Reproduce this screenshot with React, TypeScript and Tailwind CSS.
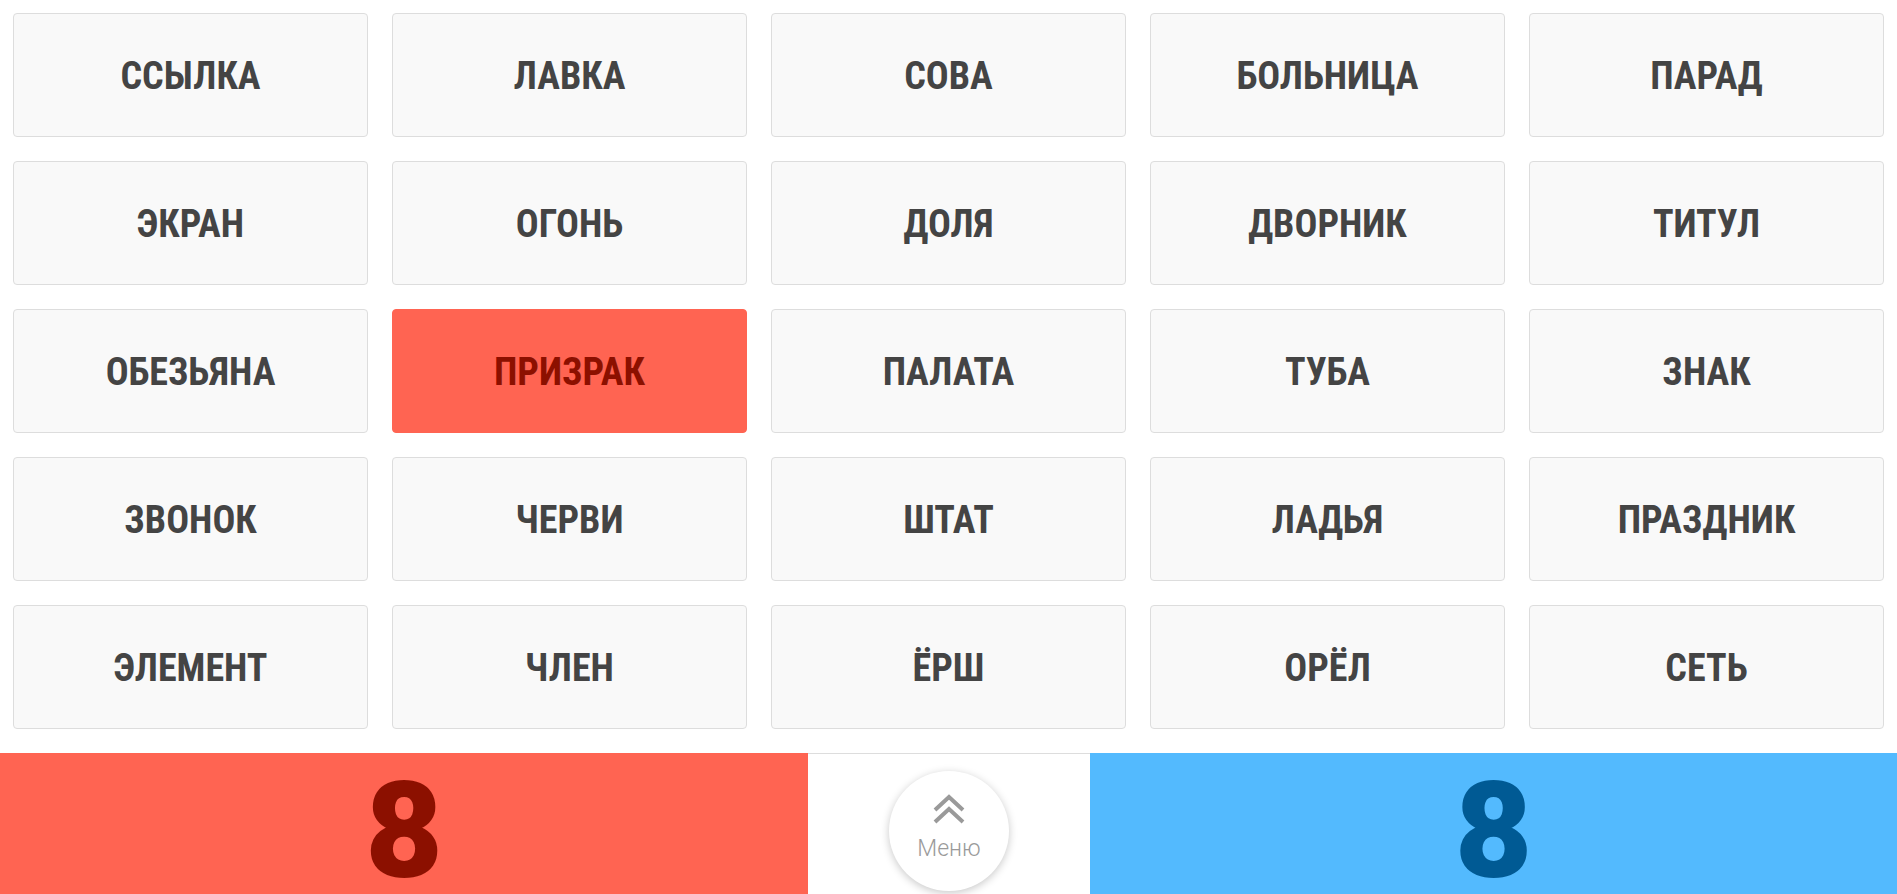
import React from "react";

const words = [
  "ССЫЛКА", "ЛАВКА", "СОВА", "БОЛЬНИЦА", "ПАРАД",
  "ЭКРАН", "ОГОНЬ", "ДОЛЯ", "ДВОРНИК", "ТИТУЛ",
  "ОБЕЗЬЯНА", "ПРИЗРАК", "ПАЛАТА", "ТУБА", "ЗНАК",
  "ЗВОНОК", "ЧЕРВИ", "ШТАТ", "ЛАДЬЯ", "ПРАЗДНИК",
  "ЭЛЕМЕНТ", "ЧЛЕН", "ЁРШ", "ОРЁЛ", "СЕТЬ",
];

export default function App() {
  return (
    <div className="w-[1897px] h-[894px] overflow-hidden bg-white flex flex-col" style={{ fontFamily: "Roboto, 'Noto Sans', sans-serif" }}>
      <div className="grid grid-cols-5 gap-x-[24px] gap-y-[24px] px-[13px] pt-[13px] pb-[24px]">
        {words.map((w) => {
          const red = w === "ПРИЗРАК";
          return (
            <div
              key={w}
              className={
                red
                  ? "h-[124px] rounded-[4px] bg-[#ff6452] border border-[#ff6452] flex items-center justify-center"
                  : "h-[124px] rounded-[4px] bg-[#f9f9f9] border border-[#dddddd] flex items-center justify-center"
              }
            >
              <span
                className={
                  red
                    ? "text-[38px] font-bold text-[#8c1000] leading-none mt-[2px]"
                    : "text-[38px] font-bold text-[#444444] leading-none mt-[2px]"
                }
                style={{ fontFamily: "'Roboto Condensed', 'Liberation Sans Narrow', 'DejaVu Sans Condensed', Roboto, sans-serif" }}
              >
                {w}
              </span>
            </div>
          );
        })}
      </div>
      <div className="flex h-[141px] shrink-0">
        <div className="w-[808px] bg-[#ff6452] flex items-start justify-center pt-[29px]">
          <span className="text-[134px] font-black text-[#8c1000] leading-[100px]" style={{ fontFamily: "Roboto, sans-serif" }}>8</span>
        </div>
        <div className="flex-1 border-t border-[#dddddd] flex justify-center pt-[17px]">
          <div className="w-[120px] h-[120px] rounded-full bg-white shadow-[0_2px_8px_rgba(0,0,0,0.22)] flex flex-col items-center pt-[23px]">
            <svg width="34" height="32" viewBox="0 0 34 32" fill="none" stroke="#9a9a9a" strokeWidth="4">
              <path d="M3 16 L17 3 L31 16" />
              <path d="M3 28 L17 15 L31 28" />
            </svg>
            <span className="text-[23px] font-light text-[#9a9a9a] leading-none mt-[11px]">Меню</span>
          </div>
        </div>
        <div className="w-[807px] bg-[#53bafe] flex items-start justify-center pt-[29px]">
          <span className="text-[134px] font-black text-[#005a94] leading-[100px]" style={{ fontFamily: "Roboto, sans-serif" }}>8</span>
        </div>
      </div>
    </div>
  );
}
